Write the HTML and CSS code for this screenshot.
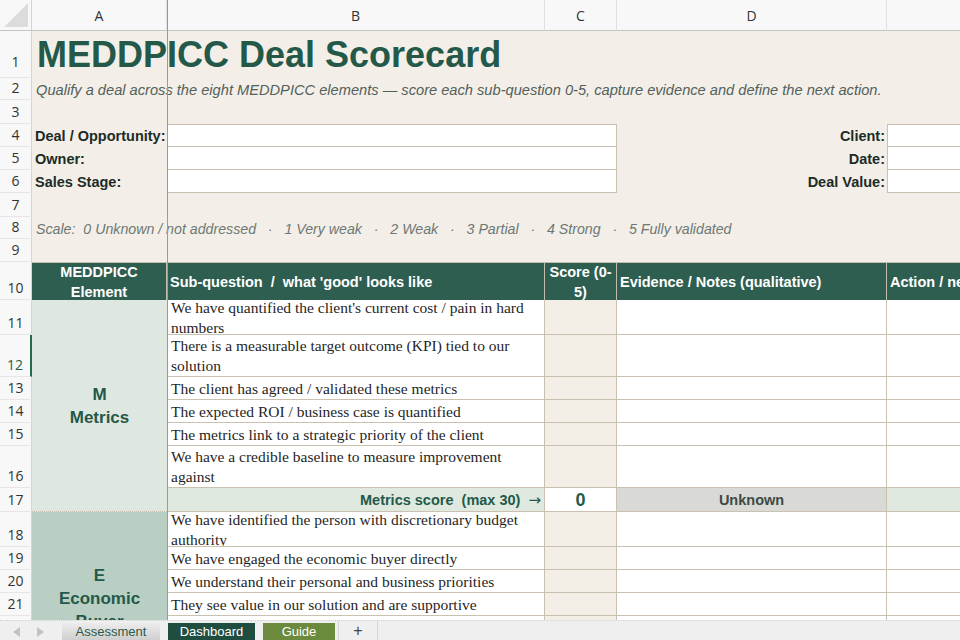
FILE: index.html
```html
<!DOCTYPE html>
<html lang="en">
<head>
  <meta charset="UTF-8" />
  <title>MEDDPICC Deal Scorecard</title>
  <link rel="stylesheet" href="styles.css">
</head>
<body>
<div class="app">
  <div class="sheet-wrap">
    <div class="sheet">
      <!-- column headers -->
      <div class="corner">
        <svg width="26" height="26" viewBox="0 0 26 26"><polygon points="25,1 25,25 1,25" fill="#dcdcdc"/></svg>
      </div>
      <div class="colhead">A</div>
      <div class="colhead">B</div>
      <div class="colhead">C</div>
      <div class="colhead">D</div>
      <div class="colhead">E</div>

      <!-- intro block -->
      <div class="rh first">1</div>
      <div class="title">MEDDPICC Deal Scorecard</div>

      <div class="rh">2</div>
      <div class="subtitle">Qualify a deal across the eight MEDDPICC elements — score each sub-question 0-5, capture evidence and define the next action.</div>

      <div class="rh">3</div>

      <div class="rh">4</div>
      <div class="label ca">Deal / Opportunity:</div>
      <div class="field wide top"></div>
      <div class="label right cd">Client:</div>
      <div class="field ce top"></div>

      <div class="rh">5</div>
      <div class="label ca">Owner:</div>
      <div class="field wide"></div>
      <div class="label right cd">Date:</div>
      <div class="field ce"></div>

      <div class="rh">6</div>
      <div class="label ca">Sales Stage:</div>
      <div class="field wide"></div>
      <div class="label right cd">Deal Value:</div>
      <div class="field ce"></div>

      <div class="rh">7</div>

      <div class="rh">8</div>
      <div class="scale">Scale:  0 Unknown / not addressed   ·   1 Very weak   ·   2 Weak   ·   3 Partial   ·   4 Strong   ·   5 Fully validated</div>

      <div class="rh">9</div>

      <!-- table header -->
      <div class="rh">10</div>
      <div class="th ca center">MEDDPICC Element</div>
      <div class="th cb">Sub-question  /  what 'good' looks like</div>
      <div class="th cc center">Score (0-<br>5)</div>
      <div class="th cd">Evidence / Notes (qualitative)</div>
      <div class="th ce">Action / next step</div>

      <!-- M : Metrics -->
      <div class="rh">11</div>
      <div class="el metrics"><span>M</span><span>Metrics</span></div>
      <div class="q">We have quantified the client's current cost / pain in hard numbers</div>
      <div class="sc"></div><div class="ev"></div><div class="ac"></div>

      <div class="rh active">12</div>
      <div class="q">There is a measurable target outcome (KPI) tied to our solution</div>
      <div class="sc"></div><div class="ev"></div><div class="ac"></div>

      <div class="rh">13</div>
      <div class="q">The client has agreed / validated these metrics</div>
      <div class="sc"></div><div class="ev"></div><div class="ac"></div>

      <div class="rh">14</div>
      <div class="q">The expected ROI / business case is quantified</div>
      <div class="sc"></div><div class="ev"></div><div class="ac"></div>

      <div class="rh">15</div>
      <div class="q">The metrics link to a strategic priority of the client</div>
      <div class="sc"></div><div class="ev"></div><div class="ac"></div>

      <div class="rh">16</div>
      <div class="q">We have a credible baseline to measure improvement against</div>
      <div class="sc"></div><div class="ev"></div><div class="ac"></div>

      <div class="rh">17</div>
      <div class="total">Metrics score  (max 30) <span class="arrow">→</span></div>
      <div class="score-val">0</div>
      <div class="status">Unknown</div>
      <div class="ac total-end"></div>

      <!-- E : Economic Buyer -->
      <div class="rh">18</div>
      <div class="el buyer"><span>E</span><span>Economic</span><span>Buyer</span></div>
      <div class="q">We have identified the person with discretionary budget authority</div>
      <div class="sc"></div><div class="ev"></div><div class="ac"></div>

      <div class="rh">19</div>
      <div class="q">We have engaged the economic buyer directly</div>
      <div class="sc"></div><div class="ev"></div><div class="ac"></div>

      <div class="rh">20</div>
      <div class="q">We understand their personal and business priorities</div>
      <div class="sc"></div><div class="ev"></div><div class="ac"></div>

      <div class="rh">21</div>
      <div class="q">They see value in our solution and are supportive</div>
      <div class="sc"></div><div class="ev"></div><div class="ac"></div>

      <div class="rh"></div>
      <div class="q"></div>
      <div class="sc"></div><div class="ev"></div><div class="ac"></div>

      <div class="rh"></div>
      <div class="q"></div>
      <div class="sc"></div><div class="ev"></div><div class="ac"></div>

      <div class="rh"></div>
      <div class="q"></div>
      <div class="sc"></div><div class="ev"></div><div class="ac"></div>
    </div>
    <div class="freeze"></div>
  </div>

  <div class="tabs">
    <div class="nav">
      <svg width="8" height="10" viewBox="0 0 8 10"><polygon points="7,0 7,10 0,5" fill="#c2c2c2"/></svg>
      <svg width="8" height="10" viewBox="0 0 8 10"><polygon points="1,0 1,10 8,5" fill="#c2c2c2"/></svg>
    </div>
    <div class="tab assessment">Assessment</div>
    <div class="tab dashboard">Dashboard</div>
    <div class="tab guide">Guide</div>
    <div class="add">+</div>
  </div>
</div>
</body>
</html>
```

FILE: styles.css
```css
* {
  margin: 0;
  padding: 0;
  box-sizing: border-box;
}

body {
  width: 960px;
  height: 640px;
  overflow: hidden;
  font-family: 'Liberation Sans', Arial, sans-serif;
  background: #fff;
}

.app {
  display: flex;
  flex-direction: column;
  height: 640px;
}

.sheet-wrap {
  position: relative;
  flex: 1;
  overflow: hidden;
}

.sheet {
  display: grid;
  grid-template-columns: 32px 135px 378px 72px 270px 200px;
  grid-template-rows:
    31px 47px 22px 24px 23px 23px 23px 24px 22px 23px
    38px 35px 42px 23px 23px 23px 42px 24px
    35px 23px 23px 23px 23px 23px 23px;
  width: max-content;
  background: #f3efe8;
}

/* column / row headers */
.corner {
  background: #f8f8f8;
  border-right: 1px solid #d4d4d4;
  border-bottom: 1px solid #c4c4c4;
  padding: 2px 0 0 3px;
}

.colhead {
  background: #f8f8f8;
  border-right: 1px solid #e0e0e0;
  border-bottom: 1px solid #c4c4c4;
  display: flex;
  align-items: center;
  justify-content: center;
  font-family: 'Open Sans', sans-serif;
  font-size: 14px;
  color: #333;
}

.rh {
  grid-column: 1;
  background: #f8f8f8;
  border-right: 1px solid #d4d4d4;
  border-bottom: 1px solid #e6e6e6;
  display: flex;
  align-items: flex-end;
  justify-content: center;
  padding-bottom: 3px;
  font-family: 'Open Sans', sans-serif;
  font-size: 14px;
  line-height: 16px;
  color: #333;
}

.rh.first {
  padding-bottom: 7px;
}

.rh.active {
  border-right: 2px solid #1f6b4a;
  color: #1f5e44;
}

.freeze {
  position: absolute;
  left: 167px;
  top: 0;
  width: 1px;
  height: 100%;
  background: #9a9a9a;
}

/* column helpers */
.ca { grid-column: 2; }
.cb { grid-column: 3; }
.cc { grid-column: 4; }
.cd { grid-column: 5; }
.ce { grid-column: 6; }

/* intro */
.title {
  grid-column: 2 / -1;
  display: flex;
  align-items: center;
  padding-left: 5px;
  font-size: 36px;
  line-height: 40px;
  font-weight: bold;
  color: #24594a;
  white-space: nowrap;
}

.subtitle {
  grid-column: 2 / -1;
  display: flex;
  align-items: center;
  padding: 2px 0 0 4px;
  font-size: 14.65px;
  font-style: italic;
  color: #52605b;
  white-space: nowrap;
}

.label {
  display: flex;
  align-items: center;
  padding-left: 3px;
  font-size: 14.5px;
  font-weight: bold;
  color: #1d2b27;
  white-space: nowrap;
}

.label.right {
  justify-content: flex-end;
  padding: 0 2px 0 0;
}

.field {
  background: #fff;
  border: 1px solid #cbc1b0;
  border-top: none;
}

.field.top {
  border-top: 1px solid #cbc1b0;
}

.field.wide {
  grid-column: 3 / 5;
}

.scale {
  grid-column: 2 / -1;
  display: flex;
  align-items: center;
  padding: 1px 0 0 4px;
  font-size: 14.2px;
  font-style: italic;
  color: #6d7874;
  white-space: pre;
}

/* table header */
.th {
  background: #2e5e50;
  color: #fff;
  font-size: 14.5px;
  font-weight: bold;
  line-height: 20px;
  display: flex;
  align-items: center;
  padding: 0 3px;
  border-top: 1px solid #c4bdae;
  border-right: 1px solid #c4bdae;
  white-space: pre;
  overflow: hidden;
}

.th.center {
  justify-content: center;
  text-align: center;
  white-space: normal;
}

/* body cells */
.el {
  grid-column: 2;
  grid-row: span 7;
  display: flex;
  flex-direction: column;
  align-items: center;
  justify-content: center;
  font-size: 17px;
  line-height: 23px;
  font-weight: bold;
  color: #24594a;
  border-bottom: 1px dotted #c9bda9;
}

.el.metrics { background: #dfe8e0; }
.el.buyer { background: #b9cfc4; }

.q {
  grid-column: 3;
  background: #fff;
  display: flex;
  align-items: center;
  padding: 1px 3px 0 4px;
  font-family: 'Liberation Serif', 'Times New Roman', serif;
  font-size: 15.5px;
  line-height: 20px;
  color: #1f1f1f;
  border-right: 1px solid #cbc1b0;
  border-bottom: 1px solid #cbc1b0;
  overflow: hidden;
}

.sc,
.ev,
.ac,
.score-val,
.status {
  border-right: 1px solid #cbc1b0;
  border-bottom: 1px solid #cbc1b0;
}

.sc { grid-column: 4; background: #f3efe7; }
.ev { grid-column: 5; background: #fff; }
.ac { grid-column: 6; background: #fff; }

/* score row */
.total {
  grid-column: 3;
  background: #dfe9e0;
  display: flex;
  align-items: center;
  justify-content: flex-end;
  padding: 1px 3px 0 0;
  font-size: 14.5px;
  font-weight: bold;
  color: #24594a;
  white-space: pre;
  border-right: 1px solid #cbc1b0;
  border-bottom: 1px solid #cbc1b0;
}

.arrow {
  font-family: 'DejaVu Sans', sans-serif;
  font-weight: normal;
  font-size: 15px;
  margin-left: 4px;
}

.score-val {
  grid-column: 4;
  background: #fff;
  display: flex;
  align-items: center;
  justify-content: center;
  padding-top: 2px;
  font-size: 18px;
  font-weight: bold;
  color: #24594a;
}

.status {
  grid-column: 5;
  background: #d9d9d6;
  display: flex;
  align-items: center;
  justify-content: center;
  padding-top: 1px;
  font-size: 14.5px;
  font-weight: bold;
  color: #3d4a45;
}

.ac.total-end { background: #dfe9e0; }

/* sheet tabs */
.tabs {
  height: 20px;
  display: flex;
  align-items: stretch;
  background: #efefef;
  border-top: 1px dotted #d2d2d2;
  font-size: 13px;
  line-height: 16px;
}

.nav {
  width: 62px;
  display: flex;
  align-items: center;
  gap: 15px;
  padding: 2px 0 0 13px;
}

.tab {
  display: flex;
  align-items: center;
  justify-content: center;
  margin: 2px 8px 0 0;
}

.assessment {
  width: 98px;
  background: linear-gradient(#ececec, #cfcfcf);
  color: #2c5a49;
}

.dashboard {
  width: 87px;
  background: #1f4e40;
  color: #fff;
}

.guide {
  width: 72px;
  margin-right: 3px;
  background: #6b8a3c;
  color: #fff;
}

.add {
  width: 40px;
  display: flex;
  align-items: center;
  justify-content: center;
  border-left: 1px solid #d6d6d6;
  border-right: 1px solid #d6d6d6;
  font-size: 16px;
  line-height: 16px;
  color: #444;
}
```
